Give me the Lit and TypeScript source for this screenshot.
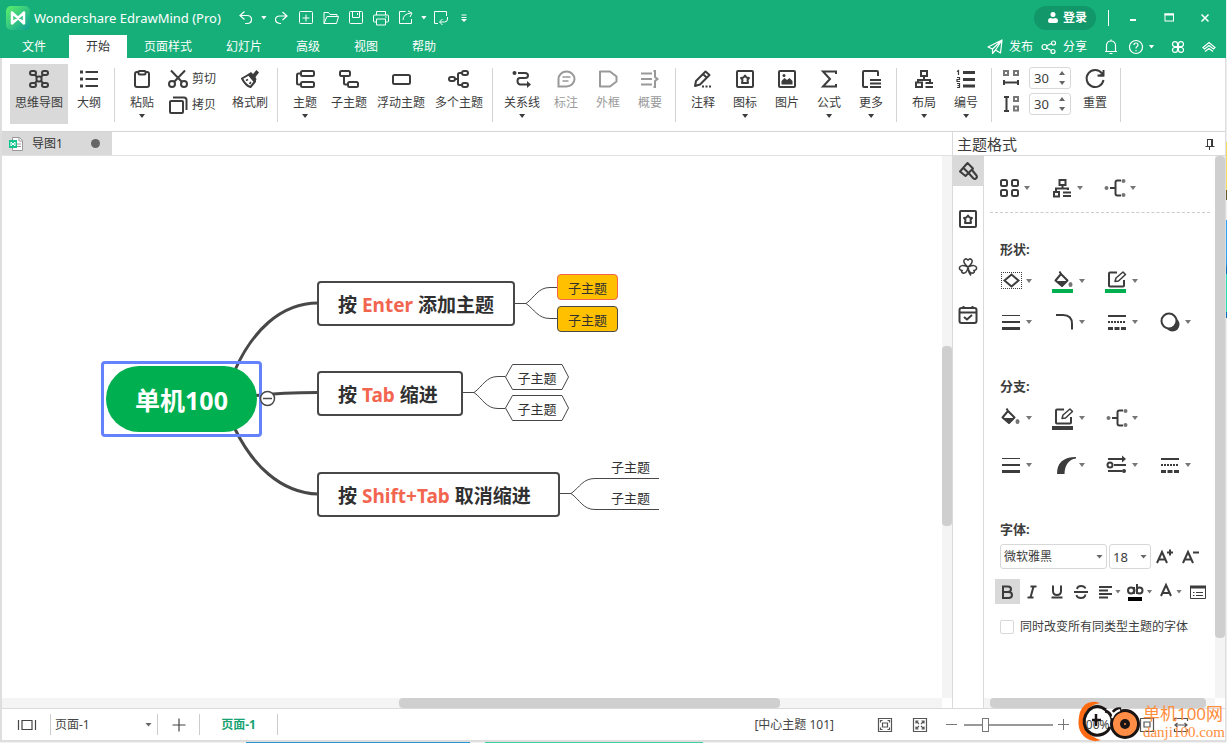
import { LitElement, html, svg, css, nothing } from "lit";
import { customElement } from "lit/decorators.js";
import { classMap } from "lit/directives/class-map.js";
import { styleMap } from "lit/directives/style-map.js";

const base = css`
  * { box-sizing: border-box; }
  :host {
    display: block;
    font-family: "Noto Sans", "Noto Sans CJK SC", sans-serif;
    font-size: 12px;
    line-height: 16px;
    color: #333;
  }
  button, select, input {
    font: inherit;
    color: inherit;
    margin: 0;
    padding: 0;
    border: 0;
    background: none;
    border-radius: 0;
  }
  button { display: inline-flex; align-items: center; justify-content: center; white-space: nowrap; }
  svg { display: block; flex: none; overflow: visible; fill: none; stroke: currentColor; }
  .solid { fill: currentColor; stroke: none; }
  .caret {
    flex: none;
    width: 6px;
    height: 4px;
    background: currentColor;
    clip-path: polygon(0 0, 100% 0, 50% 100%);
  }
`;

const caret = html`<span class="caret"></span>`;

/* Icons drawn on a 20 x 20 grid. */
const glyphs: Record<string, unknown> = {
  mind: svg`<g stroke-width="2"><rect x="1" y="2" width="6" height="4" rx="2"/><rect x="13" y="2" width="6" height="4" rx="2"/><rect x="1" y="14" width="6" height="4" rx="2"/><rect x="13" y="14" width="6" height="4" rx="2"/><rect x="7.500" y="7.500" width="5" height="5" rx="2"/><path d="M6 6l2 2M14 6l-2 2M6 14l2-2M14 14l-2-2"/></g>`,
  outline: svg`<path stroke-width="2" d="M6.500 3H19M6.500 10H19M6.500 17H19"/><path class="solid" d="M1 1.500h3v3H1zM1 8.500h3v3H1zM1 15.500h3v3H1z"/>`,
  paste: svg`<rect x="3" y="3" width="14" height="15" rx="2" stroke-width="2"/><rect x="6.500" y="2" width="7" height="3.500" rx="1" stroke-width="2" fill="#fff"/>`,
  cut: svg`<g stroke-width="2"><circle cx="4" cy="15" r="3"/><circle cx="16" cy="15" r="3"/><path d="M3 1.500L14 13M17 1.500L6 13"/></g>`,
  copy: svg`<rect x="2" y="6" width="13" height="12" rx="1" stroke-width="2"/><path stroke-width="2" d="M5 2.500h11q2.500 0 2.500 2.500v10"/>`,
  brush: svg`<path stroke-width="2" stroke-linejoin="round" d="M2 9.500L9 5.500l6 7-4.500 5.500C7 17 4 13.500 2 9.500z"/><path class="solid" d="M7.500 5.500L11 3l2 2 3.500-4 2.500 2.500-3.500 4.500 1 2.500-2 3.500z"/><path d="M6 11.500l2-1M9.500 15l1.500-2" stroke-width="1.500"/>`,
  topic: svg`<g stroke-width="2"><rect x="6" y="2" width="13" height="5" rx="1.500"/><rect x="6" y="13" width="13" height="5" rx="1.500"/><path d="M6 4.500H3.500q-1.500 0-1.500 1.500v8q0 1.500 1.500 1.500H6"/></g>`,
  sub: svg`<g stroke-width="2"><rect x="1" y="2" width="10" height="5" rx="1.500"/><rect x="9" y="13" width="10" height="5" rx="1.500"/><path d="M5 7v7q0 1.500 1.500 1.500H9"/></g>`,
  float: svg`<rect x="2" y="6" width="17" height="9" rx="1.500" stroke-width="2"/>`,
  multi: svg`<g stroke-width="2"><rect x="0" y="8" width="6" height="4" rx="2"/><rect x="13" y="2" width="6" height="4" rx="2"/><rect x="13" y="14" width="6" height="4" rx="2"/><path d="M6 10h3M13 4h-2.500q-1.500 0-1.500 1.500v9q0 1.500 1.500 1.500H13"/></g>`,
  relation: svg`<path stroke-width="2" d="M6 4h7q3 0 3 2.500T13 9H8q-2.500 0-2.500 3T8 15.500h8"/><circle class="solid" cx="2.500" cy="4" r="2"/><path class="solid" d="M15 12l4 3.500-4 3.500z"/>`,
  callout: svg`<path stroke-width="2" d="M2.500 17.500V10a8 7.500 0 1 1 8 7.500z"/><path stroke-width="1.500" d="M6.500 8h8M6.500 12h6"/>`,
  frame: svg`<path stroke-width="2" stroke-linejoin="round" d="M2 2.500h10l6.500 5v5l-6.500 5H2z"/>`,
  summary: svg`<path stroke-width="2" d="M1 4.500h11M1 10h11M1 15.500h11"/><path stroke-width="2" d="M13.500 2h1.500v6l2.500 2-2.500 2v6h-1.500"/>`,
  note: svg`<path stroke-width="2" stroke-linejoin="round" d="M3 12L12.500 2.500l4 3.500L7 15.500l-5 1.500zM10 5l4 4"/><path stroke-width="2" stroke-dasharray="2 1.500" d="M9 17.500h10"/>`,
  star: svg`<rect x="2" y="2" width="16" height="16" rx="1" stroke-width="2"/><path stroke-width="2" stroke-linejoin="round" d="M10 6.500l1.500 2 2.500.5-1.500 2 .5 3h-6l.5-3-1.500-2 2.500-.5z"/>`,
  image: svg`<rect x="2" y="2" width="16" height="16" rx="1" stroke-width="2"/><path class="solid" d="M4.500 15.500V12l3-3 2.500 2 2.500-2 3 3v3.500z"/><circle class="solid" cx="7" cy="6.500" r="1.500"/>`,
  sigma: svg`<path stroke-width="2" d="M17 5V2.500H4l7 7.500-7 7.500h13V15"/>`,
  more: svg`<path stroke-width="2" d="M7 18H3q-1 0-1-1V3q0-1 1-1h13q1 0 1 1v4M9 11h11M9 14.500h11M9 18h11"/>`,
  layout: svg`<g stroke-width="2"><rect x="7" y="2" width="6" height="5"/><path d="M10 7v4M4 13v-2h12v2M11.500 14h7.500M11.500 18h7.500"/><rect x="2" y="13.500" width="6" height="4.500"/></g>`,
  number: svg`<path stroke-width="3" d="M7 3.500h12M7 10.500h12M7 17h12"/><path d="M1 2.500l1.500-1V6M1 8.500h2.500v2H1v2h3M1 14.500h2.500v4H1M1.500 16.500h2" stroke-width="1.200"/>`,
  hspace: svg`<g stroke-width="2"><path stroke="#777" d="M3 3h4v4H3zM13 3h4v4h-4z"/><path d="M3 14.500h14M3 12v5M17 12v5"/></g>`,
  vspace: svg`<g stroke-width="2"><path stroke="#777" d="M13 3h4v4h-4zM13 12.500h4v4h-4z"/><path d="M5.500 3v14M3 3h5M3 17h5"/></g>`,
  reset: svg`<path stroke-width="2" d="M17 4.500A8.500 8.500 0 1 0 18.500 11M12.500 6.500h6V1"/><path class="solid" d="M13 7.500h6V2z"/>`,
  undo: svg`<path stroke-width="1.200" d="M8.500 3.500l-4.500 4 4.500 4M4 7.500h7q4.500 0 4.500 4t-4.500 4H9"/>`,
  redo: svg`<path stroke-width="1.200" d="M11.500 4l4.500 4-4.500 4M16 8H9q-4.500 0-4.500 3.500T9 15.500h1"/>`,
  add: svg`<rect x="3.500" y="3.500" width="13" height="12" rx="1"/><path d="M10 6.500v7M6.500 10h7"/>`,
  open: svg`<path d="M3 15.500V4.500h4.500l1.500 2h7v2M3 15.500l3-7h11.500l-2 7z"/>`,
  save: svg`<rect x="3.500" y="3.500" width="13" height="12" rx="1"/><path d="M6.500 3.500v6h7v-6M11.500 5v2"/>`,
  print: svg`<path d="M5.500 7V3.500h9V7M5.500 14h-2q-1 0-1-1V8q0-1 1-1h13q1 0 1 1v5q0 1-1 1h-2M5.500 11h9v6h-9zM14 9h1.500"/>`,
  exportTo: svg`<path d="M9.500 3.500h-6v12h12V11M7 12q0-6 8-7M12 3l4 2-2 4"/>`,
  importTo: svg`<path d="M7 15.500H3.500v-12h12V8M16.500 9v2q0 3-3 3H9M11.500 11l-3 3 3 3"/>`,
  customize: svg`<path d="M7.500 7h5M7.500 9.500h5"/><path class="solid" d="M7 11h6l-3 3z"/>`,
  user: svg`<circle class="solid" cx="10" cy="6.500" r="2.500"/><path class="solid" d="M5 13q0-3 3-3 2 1 4 0 3 0 3 3 0 2-2 2H7q-2 0-2-2z"/>`,
  send: svg`<path stroke-width="1.200" stroke-linejoin="round" d="M3 10L17 3l-1.500 13-5-3L17 3 7.500 12zM7.500 12v4.500l3-3.500"/>`,
  share: svg`<g stroke-width="1.200"><circle cx="5.500" cy="10" r="2.500"/><circle cx="14.500" cy="6" r="2"/><circle cx="14" cy="14.500" r="2"/><path d="M7.500 9l5-2.500M7.500 11l5 2.500"/></g>`,
  bell: svg`<path stroke-width="1.200" d="M4 14.500h12M5.500 14.500V9q0-5 4.500-5t4.500 5v5.500M10 4V2.500M8.500 16.500h3"/>`,
  help: svg`<circle cx="10" cy="10" r="6.500" stroke-width="1.200"/><path stroke-width="1.200" d="M8 8q0-2 2-2t2 2q0 1-1 1.500T10 11.500M10 13v1.200"/>`,
  clover: svg`<g stroke-width="1.200"><path d="M9.500 9.500H6.500a2.500 2.500 0 1 1 3-2.500zM10.500 9.500V7a2.500 2.500 0 1 1 3 2.500zM9.500 10.500V13a2.500 2.500 0 1 1-3-2.500zM10.500 10.500h3a2.500 2.500 0 1 1-3 2.500z"/></g>`,
  collapse: svg`<path stroke-width="1.200" d="M4 10.500l6-5 6 5-1.500 1.500-4.500-3.500-4.500 3.500zM6 14.500l4-3 4 3"/>`,
  min: svg`<path stroke-width="2" d="M7 12h6"/>`,
  max: svg`<rect x="6" y="6" width="8.500" height="7"/><path stroke-width="2" d="M5.500 6.500h9.500"/>`,
  close: svg`<path stroke-width="1.500" d="M6.500 6.500l7 7M13.500 6.500l-7 7"/>`,
  pin: svg`<path d="M7 5.500h6M7.500 5v7M5.500 12.500h9M9.500 12v4"/><path stroke-width="2" d="M12 5v7"/>`,
  paint: svg`<g stroke-width="2" stroke-linejoin="round"><path d="M2 10.500L9.500 2l5.500 5.500L7.500 15zM5.500 7l6 6"/><path d="M14 9l4.500 5.500q1 2-.5 3-2 1-3-.5L11 12.500"/></g>`,
  trefoil: svg`<path stroke-width="1.500" d="M10 10Q4 5 6.500 2.500 8.500 1 10 3q1.500-2 3.500-.5Q16 5 10 10zM10 10Q9 17 4.500 16 3 15 4 13.500 1 13 1.500 10.500 2.500 7 10 10zM10 10q7.500-3 8.500.5.500 2.500-2.500 3 1 1.500-.5 2.500Q11 17 10 10zM10 10q0 5 3 8.500"/>`,
  task: svg`<rect x="1.500" y="3" width="17" height="15" rx="2" stroke-width="2"/><path stroke-width="2" d="M1.500 7.500h17M5.500 1v3M14.500 1v3M6 12l3 2.500 5-4.500"/>`,
  slides: svg`<path stroke-width="1.200" d="M1.500 5v10M18.500 5v10M5 5.500h10v9H5z"/>`,
  plus: svg`<path stroke-width="1.200" d="M10 3.500v13M3.500 10h13"/>`,
  fit: svg`<path stroke-width="1.200" d="M3.500 3.500h13v13h-13zM7.500 8h5v4h-5zM5.500 7.500v-2h2M12.500 5.500h2v2M14.500 12.500v2h-2M7.500 14.500h-2v-2"/>`,
  full: svg`<path stroke-width="1.200" d="M3.500 3.500h13v13h-13zM6 8.500V6h2.500M11.500 6H14v2.500M14 11.500V14h-2.500M8.500 14H6v-2.500M6 6l3 3M14 6l-3 3M14 14l-3-3M6 14l3-3"/>`,
  actual: svg`<path stroke-width="1.200" d="M3.500 3.500h13v13h-13zM7 7h6v5H7z"/>`,
  widthFit: svg`<path stroke-width="1.200" d="M16.500 6V3.500h-13V6M3.500 14v2.500h13V14M4 10h12M6.500 8L4 10l2.500 2M13.500 8l2.500 2-2.500 2"/>`,
};
const icon = (name: string, size = 20) =>
  html`<svg width=${size} height=${size} viewBox="0 0 20 20" aria-hidden="true">${glyphs[name]}</svg>`;

/* Format panel icons, drawn on a 22 x 24 grid. */
const bucket = svg`<path stroke-width="2" stroke-linejoin="round" d="M8 5l6.500 6.500L9 17l-6.500-5.500L8 5 6.500 2.500"/><path class="solid" d="M3 12h11.500L9 17.500z"/><ellipse class="solid" cx="17.500" cy="15.500" rx="2" ry="2.500" opacity=".7"/>`;
const pen = svg`<path stroke-width="2" d="M11 3.500H4q-1 0-1 1v12q0 1 1 1h13q1 0 1-1V11"/><path stroke-width="1.500" stroke-linejoin="round" d="M9 12.500l1-3.500 7-6 2.500 2.500-7 6.500z"/>`;
const connector = svg`<path stroke-width="2" d="M6 12h6M17 4.500h-3.500q-2 0-2 2v11q0 2 2 2H17"/><g class="solid" opacity=".7"><circle cx="2.500" cy="12" r="2"/><circle cx="19.500" cy="5" r="2"/><circle cx="19.500" cy="19" r="2"/></g>`;
const weights = svg`<path d="M2 5.500h18"/><path stroke-width="2" d="M2 12h18"/><path stroke-width="3" d="M2 18.500h18"/>`;
const dashes = svg`<path stroke-width="2" d="M2 6h18"/><path stroke-width="2" stroke-dasharray="2 1" d="M2 12h18"/><path stroke-width="3" stroke-dasharray="5 1.500" d="M2 18.500h18"/>`;
const formatGlyphs: Record<string, unknown> = {
  grid4: svg`<g stroke-width="2"><rect x="3" y="4" width="6" height="6" rx="1.500"/><rect x="14" y="4" width="6" height="6" rx="1.500"/><rect x="3" y="14" width="6" height="6" rx="1.500"/><rect x="14" y="14" width="6" height="6" rx="1.500"/></g>`,
  org: svg`<g stroke-width="2"><path d="M8.500 4h6v5h-6zM11.500 9v3M5 16v-3.500h12V14M3 16h5v4.500H3zM12 16.500h8M12 20h8"/></g>`,
  connector, weights, dashes,
  shape: svg`<path stroke-dasharray="1 1" d="M1 3.500h21M1 19.500h21M1.500 5v14M21.500 5v14"/><path stroke-width="2" d="M4.500 11.500l7-6 7 6-7 6z"/>`,
  fillGreen: svg`${bucket}<path stroke="#00b050" stroke-width="4" d="M-1 22h21"/>`,
  lineGreen: svg`${pen}<path stroke="#00b050" stroke-width="4" d="M-1 22h21"/>`,
  fill: bucket,
  line: svg`${pen}<path stroke-width="4" d="M-1 22h21"/>`,
  corner: svg`<path stroke-width="2" d="M3 5h7q9 0 9 9v5.500"/>`,
  shadow: svg`<circle class="solid" cx="13.500" cy="14.500" r="7"/><circle cx="10" cy="11" r="7.500" stroke-width="2" fill="#fff"/>`,
  taper: svg`<path class="solid" d="M4 21Q4 4 23 4v1.500Q12 7 11.500 21z"/>`,
  arrows: svg`<path stroke-width="2" d="M2 6h15M8 12h12M2 18h14"/><circle cx="4" cy="12" r="2.500" stroke-width="2"/><path class="solid" d="M16 2.500L20 6l-4 3.500z"/><circle class="solid" cx="18" cy="18" r="2"/>`,
};
const formatIcon = (name: string) =>
  html`<svg width="22" height="24" viewBox="0 0 22 24" aria-hidden="true">${formatGlyphs[name]}</svg>`;

@customElement("title-bar")
class TitleBar extends LitElement {
  static styles = [base, css`
    :host { background: #16ae79; color: #fff; }
    .row { display: flex; align-items: center; justify-content: space-between; }
    .top { height: 35px; }
    .menus { height: 23px; }
    .group { display: flex; align-items: center; }
    .brand { gap: 4px; padding-left: 6px; font-size: 13px; }
    .quick { margin-left: 9px; }
    .quick button { width: 25px; height: 24px; }
    .quick .drop { width: 10px; }
    .quick .narrow { width: 20px; }
    .menu { height: 23px; padding: 0 17px; }
    .menu.first { padding-left: 22px; padding-right: 23px; }
    .menu.on { background: #fff; color: #333; }
    .wins { padding-right: 3px; }
    .login { height: 24px; width: 62px; border-radius: 12px; background: #11976a; font-weight: bold; }
    .rule { width: 1px; height: 16px; background: #fff; margin: 0 6px 0 12px; }
    .win { width: 36px; height: 24px; }
    .tools { padding-right: 7px; }
    .tools button { height: 20px; }
    .act { gap: 4px; width: 54px; }
    .bell { width: 24px; margin-left: 9px; }
    .help { gap: 3px; width: 34px; }
    .apps { width: 42px; }
    .fold { width: 20px; }
  `];
  render() {
    const menus = ["文件", "开始", "页面样式", "幻灯片", "高级", "视图", "帮助"];
    return html`
      <div class="row top">
        <div class="group brand">
          <svg width="24" height="24" viewBox="0 0 24 24">
            <defs><linearGradient id="g" x1="0" y1="0" x2="1" y2="1"><stop offset="0" stop-color="#5df06b"/><stop offset="1" stop-color="#0d9e94"/></linearGradient></defs>
            <rect width="24" height="24" rx="5" fill="url(#g)" stroke="none"/>
            <path d="M6 17.500V6.500l12 11V6.500l-12 11z" stroke="#fff" stroke-width="2.500" stroke-linejoin="round"/>
          </svg>
          <span>Wondershare EdrawMind (Pro)</span>
          <div class="group quick">
            <button aria-label="撤销">${icon("undo")}</button><button class="drop" aria-label="撤销列表">${caret}</button>
            <button aria-label="重做">${icon("redo")}</button>
            <button aria-label="新建">${icon("add")}</button>
            <button aria-label="打开">${icon("open")}</button>
            <button aria-label="保存">${icon("save")}</button>
            <button aria-label="打印">${icon("print")}</button>
            <button aria-label="导出">${icon("exportTo")}</button><button class="drop" aria-label="导出列表">${caret}</button>
            <button aria-label="导入">${icon("importTo")}</button>
            <button class="narrow" aria-label="自定义">${icon("customize")}</button>
          </div>
        </div>
        <div class="group wins">
          <button class="login">${icon("user")}登录</button>
          <span class="rule"></span>
          <button class="win" aria-label="最小化">${icon("min")}</button>
          <button class="win" aria-label="最大化">${icon("max")}</button>
          <button class="win" aria-label="关闭">${icon("close")}</button>
        </div>
      </div>
      <div class="row menus">
        <nav class="group">
          ${menus.map((m, i) => html`<button class=${classMap({ menu: true, first: i === 0, on: i === 1 })}>${m}</button>`)}
        </nav>
        <div class="group tools">
          <button class="act">${icon("send")}发布</button>
          <button class="act">${icon("share")}分享</button>
          <button class="bell" aria-label="通知">${icon("bell")}</button>
          <button class="help" aria-label="帮助">${icon("help")}${caret}</button>
          <button class="apps" aria-label="应用">${icon("clover")}</button>
          <button class="fold" aria-label="折叠功能区">${icon("collapse")}</button>
        </div>
      </div>`;
  }
}

type Tool = { i: string; t: string; drop?: boolean; off?: boolean; on?: boolean };

@customElement("ribbon-bar")
class RibbonBar extends LitElement {
  static styles = [base, css`
    :host { display: flex; align-items: flex-start; height: 74px; padding: 6px 0 0 8px; background: #fff; border-bottom: 1px solid #d4d4d4; color: #3c3c3c; }
    .tool { flex-direction: column; justify-content: flex-start; height: 60px; min-width: 42px; padding: 5px 5px 0; }
    .tool span.name { margin-top: 6px; }
    .tool .caret { margin-top: 3px; }
    .tool.on { background: #d9d9d9; }
    .tool.off { color: #999; }
    .rule { width: 1px; height: 54px; background: #d4d4d4; margin: 4px 6px 0 4px; }
    .pair { display: flex; flex-direction: column; gap: 6px; margin: 5px 11px 0 5px; }
    .pair button { gap: 4px; height: 20px; }
    .space { display: grid; grid-template-columns: 20px 42px; gap: 4px 8px; margin: 3px 3px 0 3px; align-items: center; }
    .num { display: flex; height: 22px; border: 1px solid #d8d8d8; border-radius: 3px; padding: 0 5px 0 4px; font-size: 13px; }
    .num input { width: 100%; min-width: 0; appearance: textfield; outline: none; }
    .num input::-webkit-inner-spin-button { display: none; }
    .steps { display: flex; flex-direction: column; justify-content: center; gap: 6px; color: #666; }
    .up { transform: rotate(180deg); }
  `];
  tool = (b: Tool) => html`
    <button class=${classMap({ tool: true, on: !!b.on, off: !!b.off })} ?disabled=${b.off}>
      ${icon(b.i)}<span class="name">${b.t}</span>${b.drop ? caret : nothing}
    </button>`;
  spacing = (i: string, label: string) => html`
    ${icon(i)}
    <div class="num">
      <input type="number" value="30" aria-label=${label} />
      <div class="steps"><span class="caret up"></span>${caret}</div>
    </div>`;
  render() {
    const rule = html`<span class="rule"></span>`;
    const edit: Tool[] = [
      { i: "topic", t: "主题", drop: true }, { i: "sub", t: "子主题" },
      { i: "float", t: "浮动主题" }, { i: "multi", t: "多个主题" },
    ];
    const relate: Tool[] = [
      { i: "relation", t: "关系线", drop: true }, { i: "callout", t: "标注", off: true },
      { i: "frame", t: "外框", off: true }, { i: "summary", t: "概要", off: true },
    ];
    const insert: Tool[] = [
      { i: "note", t: "注释" }, { i: "star", t: "图标", drop: true }, { i: "image", t: "图片" },
      { i: "sigma", t: "公式", drop: true }, { i: "more", t: "更多", drop: true },
    ];
    const arrange: Tool[] = [{ i: "layout", t: "布局", drop: true }, { i: "number", t: "编号", drop: true }];
    return html`
      ${this.tool({ i: "mind", t: "思维导图", on: true })}${this.tool({ i: "outline", t: "大纲" })}${rule}
      ${this.tool({ i: "paste", t: "粘贴", drop: true })}
      <div class="pair"><button>${icon("cut")}剪切</button><button>${icon("copy")}拷贝</button></div>
      ${this.tool({ i: "brush", t: "格式刷" })}${rule}
      ${edit.map(this.tool)}${rule}
      ${relate.map(this.tool)}${rule}
      ${insert.map(this.tool)}${rule}
      ${arrange.map(this.tool)}${rule}
      <div class="space">${this.spacing("hspace", "水平间距")}${this.spacing("vspace", "垂直间距")}</div>
      ${this.tool({ i: "reset", t: "重置" })}${rule}`;
  }
}

@customElement("mind-canvas")
class MindCanvas extends LitElement {
  static styles = [base, css`
    :host { position: relative; overflow: hidden; background: #fff; color: #303030; }
    .links { position: absolute; inset: 0; width: 100%; height: 100%; color: #484848; }
    .node { position: absolute; display: flex; align-items: center; justify-content: center; white-space: nowrap; padding-top: 2px; }
    .root { border-radius: 33px; background: #00b050; color: #fff; font-size: 25px; font-weight: bold; }
    .select { border: 3px solid #6482fb; border-radius: 4px; }
    .topic { border: 2px solid #484848; border-radius: 4px; background: #fff; font-size: 19px; font-weight: bold; justify-content: flex-start; padding-left: 19px; }
    .topic em { font-style: normal; color: #f2654f; white-space: pre; }
    .leaf { font-size: 13px; }
    .filled { background: #ffc000; border: 1px solid #484848; border-radius: 4px; }
    .warm { border-color: #f2654f; }
  `];
  render() {
    const at = (x: number, y: number, w: number, h: number) =>
      styleMap({ left: `${x}px`, top: `${y}px`, width: `${w}px`, height: `${h}px` });
    const topics = [
      { y: 125, w: 198, a: "Enter", b: "添加主题" },
      { y: 215, w: 146, a: "Tab", b: "缩进" },
      { y: 316, w: 243, a: "Shift+Tab", b: "取消缩进" },
    ];
    const leaves = [
      { x: 555, y: 118, w: 61, c: { filled: true, warm: true } },
      { x: 555, y: 150, w: 61, c: { filled: true } },
      { x: 503, y: 208, w: 64, c: {} },
      { x: 503, y: 239, w: 64, c: {} },
      { x: 598, y: 297, w: 61, c: {} },
      { x: 598, y: 328, w: 61, c: {} },
    ];
    return html`
      <svg class="links">
        <g stroke-width="3">
          <path d="M233 214C250 176 278 147 316 147"/>
          <path d="M254 239.500Q280 236.500 316 236.500"/>
          <path d="M233 273C250 308 278 337 316 338"/>
        </g>
        <g stroke-width="1">
          <path d="M513 147.500H524C533 141 536 131.500 548 131.500H556M524 147.500C533 154 536 162.500 548 162.500H556"/>
          <path d="M461 236.500H472C481 230 484 220.500 496 220.500H503M472 236.500C481 243 484 252.500 496 252.500H503"/>
          <path d="M558 337.500H569C578 331 581 322.500 593 322.500H657M569 337.500C578 344 581 353.500 593 353.500H657"/>
          <path d="M503.500 221l7-12.500h49.500l6.500 12.500-6.500 12.500h-49.500zM503.500 252l7-12.500h49.500l6.500 12.500-6.500 12.500h-49.500z"/>
        </g>
      </svg>
      <div class="node root" style=${at(104, 210, 151, 66)}>单机100</div>
      <div class="node select" style=${at(99, 205, 161, 76)}></div>
      ${topics.map((t) => html`<div class="node topic" style=${at(315, t.y, t.w, 45)}><span>按<em> ${t.a} </em>${t.b}</span></div>`)}
      ${leaves.map((l) => html`<div class=${classMap({ node: true, leaf: true, ...l.c })} style=${at(l.x, l.y, l.w, 26)}>子主题</div>`)}
      <svg class="links"><circle cx="265.500" cy="242.500" r="7" fill="#fff" stroke-width="1.500"/><path d="M261 242.500h9" stroke-width="1.500"/></svg>`;
  }
}

@customElement("scroll-track")
class ScrollTrack extends LitElement {
  static properties = { before: { type: Number }, size: { type: Number }, vertical: { type: Boolean } };
  declare before: number;
  declare size: number;
  declare vertical: boolean;
  static styles = css`
    :host { display: flex; min-width: 9px; min-height: 9px; background: #f4f4f4; }
    :host([vertical]) { flex-direction: column; }
    .thumb { background: #cfcfcf; border-radius: 4px; }
  `;
  render() {
    return html`<span style=${styleMap({ flex: `${this.before} 0 0` })}></span>
      <span class="thumb" style=${styleMap({ flex: `${this.size} 0 0` })}></span>
      <span style=${styleMap({ flex: `${100 - this.before - this.size} 0 0` })}></span>`;
  }
}

@customElement("format-panel")
class FormatPanel extends LitElement {
  static styles = [base, css`
    :host { display: flex; flex-direction: column; width: 273px; flex: none; border-left: 1px solid #dadada; background: #fff; color: #3c3c3c; }
    .head { display: flex; align-items: center; justify-content: space-between; height: 24px; padding: 0 5px 0 4px; border-bottom: 1px solid #dadada; font-size: 15px; }
    .main { flex: 1; display: flex; min-height: 0; }
    .rail { width: 31px; border-right: 1px solid #dadada; display: flex; flex-direction: column; gap: 18px; }
    .rail button { height: 30px; width: 30px; }
    .rail button.on { background: #d9d9d9; }
    .scroller { flex: 1; display: grid; grid-template: 1fr 10px / 1fr 10px; min-width: 0; }
    .body { padding: 20px 5px 0 6px; min-width: 0; overflow: hidden; }
    .grid { display: grid; grid-template-columns: repeat(4, 53px); padding-left: 10px; }
    .presets { padding-left: 8px; padding-bottom: 12px; border-bottom: 1px dashed #ccc; }
    .grid button { gap: 4px; height: 24px; width: 32px; }
    .grid .caret, .marks .caret { color: #777; }
    h3 { margin: 42px 0 10px 10px; font-size: 13px; line-height: 20px; font-weight: bold; }
    .presets + h3 { margin-top: 26px; }
    h3.tight { margin-bottom: 5px; }
    .shape { row-gap: 17px; }
    .branch { row-gap: 23px; }
    .fonts { display: flex; align-items: center; gap: 2px; padding-left: 10px; }
    .combo { display: grid; align-items: center; width: 107px; height: 25px; border: 1px solid #d8d8d8; border-radius: 3px; }
    .combo.size { width: 42px; font-size: 13px; }
    .combo > * { grid-area: 1 / 1; }
    .combo select { appearance: none; width: 100%; padding-left: 3px; outline: none; }
    .combo .caret { justify-self: end; margin-right: 3px; width: 7px; height: 4px; color: #666; pointer-events: none; }
    .marks { display: flex; align-items: center; margin: 10px 0 13px 5px; }
    .marks button { height: 25px; width: 25px; gap: 2px; }
    .marks button.on { background: #d9d9d9; }
    .marks .wide { width: 31px; }
    .step { width: 24px; height: 25px; }
    .same { display: flex; align-items: center; gap: 6px; padding-left: 10px; height: 20px; }
    .same input { appearance: none; width: 14px; height: 14px; border: 1px solid #d8d8d8; border-radius: 2px; }
  `];
  items = (list: string[]) => list.map((n) => html`<button aria-label=${n}>${formatIcon(n)}${caret}</button>`);
  render() {
    return html`
      <div class="head"><span>主题格式</span>${icon("pin")}</div>
      <div class="main">
        <div class="rail">
          <button class="on" aria-label="主题格式">${icon("paint")}</button>
          <button aria-label="图标">${icon("star")}</button>
          <button aria-label="剪贴画">${icon("trefoil")}</button>
          <button aria-label="任务">${icon("task")}</button>
        </div>
        <div class="scroller">
          <div class="body">
            <div class="grid presets">${this.items(["grid4", "org", "connector"])}</div>
            <h3>形状:</h3>
            <div class="grid shape">${this.items(["shape", "fillGreen", "lineGreen"])}<span></span>${this.items(["weights", "corner", "dashes", "shadow"])}</div>
            <h3>分支:</h3>
            <div class="grid branch">${this.items(["fill", "line", "connector"])}<span></span>${this.items(["weights", "taper", "arrows", "dashes"])}</div>
            <h3 class="tight">字体:</h3>
            <div class="fonts">
              <div class="combo"><select aria-label="字体"><option>微软雅黑</option></select>${caret}</div>
              <div class="combo size"><select aria-label="字号"><option>18</option></select>${caret}</div>
              <button class="step" aria-label="增大字号"><svg width="18" height="18"><path stroke-width="2" d="M1 15L6 4l5 11M3 11.500h6M11 4.500h6M14 1.500v6"/></svg></button>
              <button class="step" aria-label="减小字号"><svg width="18" height="18"><path stroke-width="2" d="M1 15L6 4l5 11M3 11.500h6M11 4.500h6"/></svg></button>
            </div>
            <div class="marks">
              <button class="on" aria-label="加粗"><svg width="16" height="16"><path stroke-width="2" d="M4 2.500h5q3 0 3 2.700T9 8H4h5.500q3.500 0 3.500 3t-3.500 3H4zV14"/></svg></button>
              <button aria-label="斜体"><svg width="16" height="16"><path stroke-width="2" d="M6.500 2.500h6M3.500 13.500h6M9.500 2.500l-3 11"/></svg></button>
              <button aria-label="下划线"><svg width="16" height="16"><path stroke-width="2" d="M4 1.500v5.500q0 4 4 4t4-4V1.500M2.500 13.500h11"/></svg></button>
              <button aria-label="删除线"><svg width="16" height="16"><path stroke-width="1.800" d="M12.500 4.500q-1-2.500-4.500-2.500T4 5M3.500 11q.5 3 4.500 3t4.500-3.500M1 8h14"/></svg></button>
              <button class="wide" aria-label="对齐"><svg width="16" height="16"><path stroke-width="2" d="M2 3h13M2 6.500h9M2 10h13M2 13.500h9"/></svg>${caret}</button>
              <button class="wide" aria-label="背景色"><svg width="18" height="18"><circle cx="5" cy="7.500" r="3" stroke-width="2"/><path stroke-width="2" d="M8 4v7M11 1v10"/><circle cx="13.500" cy="7.500" r="3" stroke-width="2"/><path stroke="#000" stroke-width="4" d="M2 16h14"/></svg>${caret}</button>
              <button class="wide" aria-label="文字颜色"><svg width="16" height="16"><path stroke-width="2" d="M3 12L8 1l5 11M4.500 9h7"/></svg>${caret}</button>
              <button aria-label="更多"><svg width="16" height="16"><path d="M.5 2.500h15v12H.5zM6 8.500h7M6 11.500h7M3 8.500h1.500M3 11.500h1.500"/><path stroke-width="3" d="M0 3h16"/></svg></button>
            </div>
            <label class="same"><input type="checkbox" />同时改变所有同类型主题的字体</label>
          </div>
          <scroll-track vertical .before=${0} .size=${89}></scroll-track>
          <scroll-track .before=${2.6} .size=${93.5}></scroll-track>
        </div>
      </div>`;
  }
}

@customElement("status-bar")
class StatusBar extends LitElement {
  static styles = [base, css`
    :host { display: flex; align-items: center; height: 32px; flex: none; border-top: 1px solid #dadada; background: #fff; position: relative; color: #444; }
    .left, .right { display: flex; align-items: center; }
    .left { flex: 1; }
    .slides { width: 48px; padding-left: 2px; }
    .rule { width: 1px; height: 21px; background: #ccc; }
    .add { width: 41px; }
    .pages { display: grid; align-items: center; width: 106px; }
    .pages > * { grid-area: 1 / 1; }
    .pages select { appearance: none; padding-left: 4px; outline: none; width: 100%; }
    .pages .caret { justify-self: end; margin-right: 5px; width: 7px; height: 4px; color: #666; pointer-events: none; }
    .page { width: 77px; color: #16a271; font-weight: bold; }
    .info { margin-right: 41px; }
    .fits { display: flex; gap: 15px; margin-right: 11px; }
    .right button { color: #555; }
    .zoom { width: 20px; }
    .zoom svg { stroke-width: 1; color: #777; }
    .slider { appearance: none; width: 89px; height: 14px; margin: 0 0 0 3px; background: linear-gradient(#999, #999) center / 100% 2px no-repeat; }
    .slider::-webkit-slider-thumb { appearance: none; width: 7px; height: 14px; background: #fff; border: 1px solid #777; }
    .percent { width: 36px; margin: 0 22px 0 6px; }
    .last { margin-right: 34px; margin-left: 14px; }
    .mark { position: absolute; right: 0; bottom: -2px; display: flex; align-items: flex-end; color: #ff8d3c; line-height: 19px; }
    .mark .copy { display: flex; flex-direction: column; font-size: 17px; }
    .mark .site { font-family: "Liberation Serif", serif; font-size: 15px; }
  `];
  render() {
    const rule = html`<span class="rule"></span>`;
    return html`
      <div class="left">
        <button class="slides" aria-label="页面列表">${icon("slides")}</button>${rule}
        <div class="pages"><select aria-label="页面"><option>页面-1</option></select>${caret}</div>${rule}
        <button class="add" aria-label="新建页面">${icon("plus")}</button>${rule}
        <button class="page">页面-1</button>${rule}
      </div>
      <div class="right">
        <span class="info">[中心主题 101]</span>
        <div class="fits">
          <button aria-label="适应窗口">${icon("fit")}</button>
          <button aria-label="全屏">${icon("full")}</button>
        </div>
        <button class="zoom" aria-label="缩小"><svg width="11" height="11"><path d="M0 5.500h11"/></svg></button>
        <input class="slider" type="range" min="0" max="100" value="22" aria-label="缩放" />
        <button class="zoom" aria-label="放大"><svg width="11" height="11"><path d="M0 5.500h11M5.500 0v11"/></svg></button>
        <span class="percent">100%</span>
        <button aria-label="实际大小">${icon("actual")}</button>
        <button class="last" aria-label="适应宽度">${icon("widthFit")}</button>
      </div>
      <div class="mark">
        <svg width="65" height="42" viewBox="0 0 65 42">
          <path d="M22 3Q8-2 2 12-3 30 8 38q7 5 15 2-4-1-9-4Q3 29 6 16 10 5 22 3z" fill="#ff6a13" stroke="none"/>
          <path d="M28 10Q19 3 11 10 3 19 8 29q7 9 17 5 5-2 7-7" stroke="#1a1414" stroke-width="3"/>
          <path d="M18 14v12M14 20h9" stroke="#1a1414" stroke-width="2.500"/>
          <path d="M27 11q7 1 8 14M35 12q3-4 8-3" stroke="#1a1414" stroke-width="3"/>
          <circle cx="47" cy="24" r="13.500" fill="#ff8d46" stroke="#1a1414" stroke-width="3"/>
          <path d="M34 18q2-6 8-8" stroke="#fff" stroke-width="2"/>
          <circle cx="47" cy="24" r="5" fill="#1a1414" stroke="none"/>
          <circle cx="47" cy="24" r="1" fill="#ff8d46" stroke="none"/>
        </svg>
        <div class="copy"><span>单机100网</span><span class="site">danji100.com</span></div>
      </div>`;
  }
}

@customElement("app-root")
class AppRoot extends LitElement {
  static styles = [base, css`
    :host { display: grid; grid-template: 1fr 1px / 1fr 1px; height: 100vh; overflow: hidden; }
    .window { display: flex; flex-direction: column; min-height: 0; min-width: 0; }
    .frame { flex: 1; display: flex; flex-direction: column; min-height: 0; border: solid #dedede; border-width: 0 1px 2px 2px; }
    .main { flex: 1; display: flex; min-height: 0; }
    .doc { flex: 1; display: flex; flex-direction: column; min-width: 0; }
    .tabs { height: 24px; display: flex; border-bottom: 1px solid #e2e2e2; }
    .tab { width: 110px; background: #d9d9d9; padding: 0 12px 0 6px; gap: 8px; justify-content: flex-start; }
    .dot { width: 9px; height: 9px; border-radius: 50%; background: #666; margin-left: auto; }
    .view { flex: 1; display: grid; grid-template: 1fr 10px / 1fr 10px; min-height: 0; }
    .right { background: linear-gradient(#eee 0 142px, #f5dd5e 142px 190px, #6b5b2c 190px 200px, #eee 200px 220px, #2a9df4 220px 262px, #0a6cb8 269px 274px, #23e0b4 274px 312px, #0a6cb8 312px 318px, #eee 318px); }
    .below { background: linear-gradient(90deg, #f2f2f2 0 246px, #2a94d4 246px 470px, #f2f2f2 470px 485px, #3fcf9c 485px 703px, #f2f2f2 703px); }
  `];
  render() {
    return html`
      <div class="window">
        <title-bar></title-bar>
        <div class="frame">
          <ribbon-bar></ribbon-bar>
          <div class="main">
            <div class="doc">
              <div class="tabs">
                <button class="tab">
                  <svg width="16" height="16" viewBox="0 0 16 16">
                    <path d="M4.500 1.500h7l3 3v10h-10z" fill="#fff" stroke="#999"/><path d="M11 1.500v3.500h3.500M9 8h4M9 10.500h4" stroke="#999"/>
                    <path d="M1 4h8v8H1z" fill="#12c48b" stroke="none"/><path d="M3 10V6l4 4V6z" stroke="#fff"/>
                  </svg>
                  导图1<span class="dot"></span>
                </button>
              </div>
              <div class="view">
                <mind-canvas></mind-canvas>
                <scroll-track vertical .before=${35} .size=${33.3}></scroll-track>
                <scroll-track .before=${42.2} .size=${40.6}></scroll-track>
              </div>
            </div>
            <format-panel></format-panel>
          </div>
          <status-bar></status-bar>
        </div>
      </div>
      <div class="right"></div>
      <div class="below"></div>`;
  }
}
